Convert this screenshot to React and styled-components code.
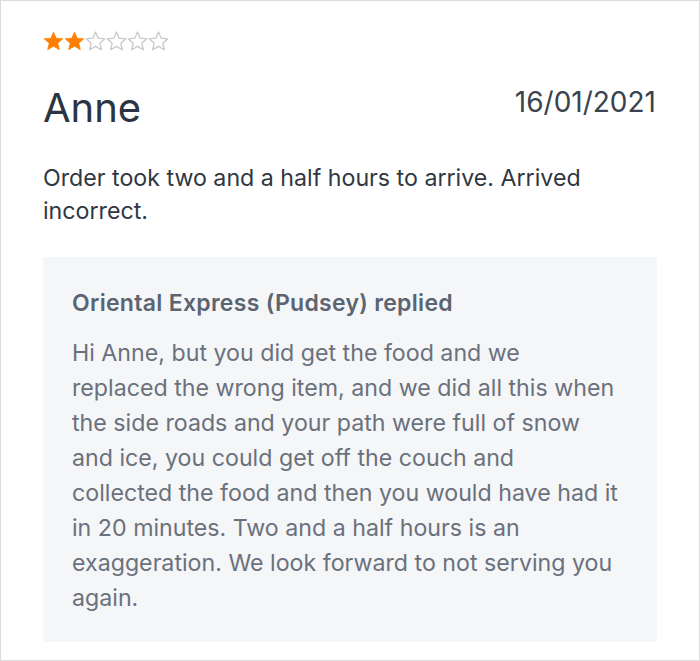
import React from "react";
import styled, { createGlobalStyle } from "styled-components";

const Global = createGlobalStyle`
  html, body { margin: 0; padding: 0; background: #ffffff; }
  body { font-family: Inter, "Noto Sans", sans-serif; }
`;

const Card = styled.article`
  box-sizing: border-box;
  width: 700px;
  height: 661px;
  border: 1px solid #dcdcdc;
  background: #ffffff;
  padding: 30px 42px 0 42px;
  display: flex;
  flex-direction: column;
`;

const Stars = styled.div`
  display: flex;
  height: 21px;
  align-items: center;
`;

const Header = styled.header`
  display: flex;
  justify-content: space-between;
  align-items: flex-start;
  margin-top: 32px;
`;

const Name = styled.h2`
  margin: 0;
  font-weight: 400;
  font-size: 40px;
  line-height: 48px;
  color: #2b3440;
`;

const DateText = styled.span`
  font-size: 28px;
  line-height: 32px;
  margin-top: 2px;
  margin-right: 1px;
  color: #3a424e;
`;

const Body = styled.p`
  margin: 30px 0 0 0;
  font-size: 23.2px;
  line-height: 33px;
  color: #2f3742;
`;

const Reply = styled.section`
  margin-top: 29px;
  background: #f5f6f8;
  padding: 31px 12px 26px 29px;
  width: 614px;
  box-sizing: border-box;
`;

const ReplyTitle = styled.h3`
  margin: 0;
  font-size: 23px;
  letter-spacing: 0.3px;
  line-height: 30px;
  font-weight: 600;
  color: #5b6470;
`;

const ReplyText = styled.p`
  margin: 18px 0 0 0;
  font-size: 23.2px;
  line-height: 35px;
  color: #6a717c;
  white-space: nowrap;
`;

const Star = ({ filled }) => (
  <svg width="21" height="21" viewBox="0 0 24 24">
    <path
      d="M12 1.2l3.1 7 7.6.7-5.8 5 1.8 7.5L12 17.5l-6.7 3.9 1.8-7.5-5.8-5 7.6-.7z"
      fill={filled ? "#ff8000" : "none"}
      stroke={filled ? "#ff8000" : "#c9c9c9"}
      strokeWidth={filled ? 0.8 : 1.5}
      strokeLinejoin="round"
    />
  </svg>
);

const replyLines = [
  "Hi Anne, but you did get the food and we",
  "replaced the wrong item, and we did all this when",
  "the side roads and your path were full of snow",
  "and ice, you could get off the couch and",
  "collected the food and then you would have had it",
  "in 20 minutes. Two and a half hours is an",
  "exaggeration. We look forward to not serving you",
  "again.",
];

export default function App() {
  const rating = 2;
  return (
    <>
      <Global />
      <Card>
        <Stars>
          {Array.from({ length: 6 }).map((_, i) => (
            <Star key={i} filled={i < rating} />
          ))}
        </Stars>
        <Header>
          <Name>Anne</Name>
          <DateText>16/01/2021</DateText>
        </Header>
        <Body>Order took two and a half hours to arrive. Arrived incorrect.</Body>
        <Reply>
          <ReplyTitle>Oriental Express (Pudsey) replied</ReplyTitle>
          <ReplyText>
            {replyLines.map((line, i) => (
              <React.Fragment key={i}>
                {line}
                {i < replyLines.length - 1 && <br />}
              </React.Fragment>
            ))}
          </ReplyText>
        </Reply>
      </Card>
    </>
  );
}
